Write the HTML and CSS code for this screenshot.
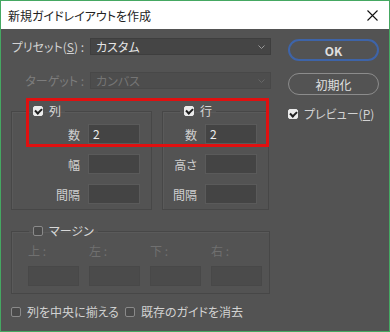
FILE: index.html
```html
<!DOCTYPE html>
<html>

<head>
	<title>新規ガイドレイアウトを作成</title>
	<link rel="stylesheet" href="styles.css">
</head>

<body>
	<div class="window">
		<div class="titlebar">
			<span class="title">新規ガイドレイアウトを作成</span>
			<svg class="close" width="11" height="11" viewBox="0 0 11 11">
				<path d="M0.5 0.5 L10.5 10.5 M10.5 0.5 L0.5 10.5" stroke="#111" stroke-width="1.1" fill="none" />
			</svg>
		</div>

		<div class="content">
			<div class="main">
				<div class="field-row preset-row">
					<span class="field-label">プリセット(<u>S</u>) :</span>
					<div class="select">
						<span>カスタム</span>
						<svg class="chevron" width="7" height="4" viewBox="0 0 7 4">
							<path d="M0.5 0.5 L3.5 3.5 L6.5 0.5" stroke="#9a9a9a" fill="none" />
						</svg>
					</div>
				</div>
				<div class="field-row target-row">
					<span class="field-label disabled">ターゲット :</span>
					<div class="select disabled">
						<span>カンバス</span>
						<svg class="chevron" width="7" height="4" viewBox="0 0 7 4">
							<path d="M0.5 0.5 L3.5 3.5 L6.5 0.5" stroke="#666" fill="none" />
						</svg>
					</div>
				</div>

				<div class="groups">
					<fieldset class="group col-group">
						<legend><span class="check checked"></span>列</legend>
						<div class="grid">
							<span class="lbl">数</span><div class="input">2</div>
							<span class="lbl">幅</span><div class="input"></div>
							<span class="lbl">間隔</span><div class="input"></div>
						</div>
					</fieldset>
					<fieldset class="group row-group">
						<legend><span class="check checked"></span>行</legend>
						<div class="grid">
							<span class="lbl">数</span><div class="input">2</div>
							<span class="lbl">高さ</span><div class="input"></div>
							<span class="lbl">間隔</span><div class="input"></div>
						</div>
					</fieldset>
				</div>

				<fieldset class="group margin-group">
					<legend><span class="check"></span>マージン</legend>
					<div class="margin-grid">
						<span class="mlbl">上 :</span>
						<span class="mlbl">左 :</span>
						<span class="mlbl">下 :</span>
						<span class="mlbl">右 :</span>
						<div class="input off"></div>
						<div class="input off"></div>
						<div class="input off"></div>
						<div class="input off"></div>
					</div>
				</fieldset>

				<div class="bottom-row">
					<span class="opt"><span class="check"></span><span>列を中央に揃える</span></span>
					<span class="opt"><span class="check"></span><span>既存のガイドを消去</span></span>
				</div>
			</div>

			<div class="side">
				<div class="btn primary">OK</div>
				<div class="btn">初期化</div>
				<div class="opt preview"><span class="check checked"></span><span>プレビュー(<u>P</u>)</span></div>
			</div>
		</div>

		<!-- highlight annotation -->
		<div class="highlight"></div>
	</div>
</body>

</html>
```

FILE: styles.css
```css
body {
	margin: 0;
	font-family: "Noto Sans CJK JP", "Noto Sans", sans-serif;
	font-size: 12px;
	font-feature-settings: "palt";
}

.window {
	position: relative;
	width: 390px;
	height: 332px;
	box-sizing: border-box;
	border: 1px solid #45a862;
	background-color: #535353;
	overflow: hidden;
}

.titlebar {
	height: 28px;
	background-color: #fff;
	display: flex;
	align-items: center;
	justify-content: space-between;
	padding: 0 11px 0 7px;
	color: #222;
}

.content {
	display: flex;
}

.main {
	width: 260px;
	padding-left: 10px;
	color: #d2d2d2;
}

.field-row {
	display: flex;
	align-items: center;
	gap: 6px;
}

.preset-row {
	margin-top: 9px;
}

.target-row {
	margin-top: 17px;
}

.field-label {
	width: 73px;
	text-align: right;
	white-space: nowrap;
}

.disabled {
	color: #7d7d7d;
}

.select {
	flex: 1;
	height: 17px;
	box-sizing: border-box;
	background-color: #454545;
	border: 1px solid #3e3e3e;
	display: flex;
	align-items: center;
	justify-content: space-between;
	padding: 0 5px;
	color: #e4e4e4;
}

.select.disabled {
	background-color: #4d4d4d;
	border-color: #484848;
	color: #757575;
}

.groups {
	display: flex;
	gap: 10px;
	margin-top: 15px;
}

.group {
	margin: 0;
	padding: 0;
	border: 1px solid #474747;
	box-shadow: inset 1px 1px 0 #5a5a5a;
}

.group legend {
	margin-left: 17px;
	padding: 0 4px;
	display: flex;
	align-items: center;
	gap: 6px;
	line-height: 14px;
	color: #d8d8d8;
}

.col-group {
	width: 139px;
	height: 104px;
}

.row-group {
	width: 105px;
	height: 104px;
}

.grid {
	display: grid;
	grid-template-columns: 1fr 52px;
	column-gap: 8px;
	row-gap: 10px;
	padding: 6px 11px 0 0;
	align-items: center;
}

.lbl {
	text-align: right;
	color: #cfcfcf;
}

.input {
	height: 20px;
	box-sizing: border-box;
	background-color: #444;
	border: 1px solid #5a5a5a;
	padding-left: 4px;
	line-height: 18px;
	color: #eee;
}

.input.off {
	background-color: #4b4b4b;
	border-color: #484848;
}

.margin-group {
	width: 257px;
	margin-top: 14px;
	padding-bottom: 7px;
}

.margin-grid {
	display: grid;
	grid-template-columns: repeat(4, 51px);
	column-gap: 10px;
	row-gap: 8px;
	padding: 6px 0 0 16px;
}

.mlbl {
	color: #707070;
	line-height: 14px;
}

.check {
	display: inline-block;
	flex: none;
	width: 10px;
	height: 10px;
	box-sizing: border-box;
	border: 1px solid #8a8a8a;
	border-radius: 2px;
	background-color: #4a4a4a;
	position: relative;
}

.check.checked {
	background-color: #ececec;
	border-color: #ececec;
}

.check.checked::after {
	content: "";
	position: absolute;
	left: 2px;
	top: 0px;
	width: 3px;
	height: 5px;
	border: solid #222;
	border-width: 0 2px 2px 0;
	transform: rotate(45deg);
}

.bottom-row {
	display: flex;
	gap: 6px;
	margin-top: 11px;
}

.opt {
	display: flex;
	align-items: center;
	gap: 6px;
	color: #d2d2d2;
	line-height: 14px;
	white-space: nowrap;
}

.side {
	padding-left: 17px;
	width: 91px;
	display: flex;
	flex-direction: column;
	color: #e0e0e0;
}

.btn {
	height: 22px;
	box-sizing: border-box;
	border: 1px solid #8c8c8c;
	border-radius: 11px;
	display: flex;
	align-items: center;
	justify-content: center;
	margin-top: 12px;
}

.btn.primary {
	margin-top: 10px;
	border: 2px solid #3e64a8;
	font-weight: bold;
}

.preview {
	margin-top: 12px;
}

.highlight {
	position: absolute;
	left: 25px;
	top: 97px;
	width: 243px;
	height: 49px;
	box-sizing: border-box;
	border: 3px solid #e01010;
}
```
